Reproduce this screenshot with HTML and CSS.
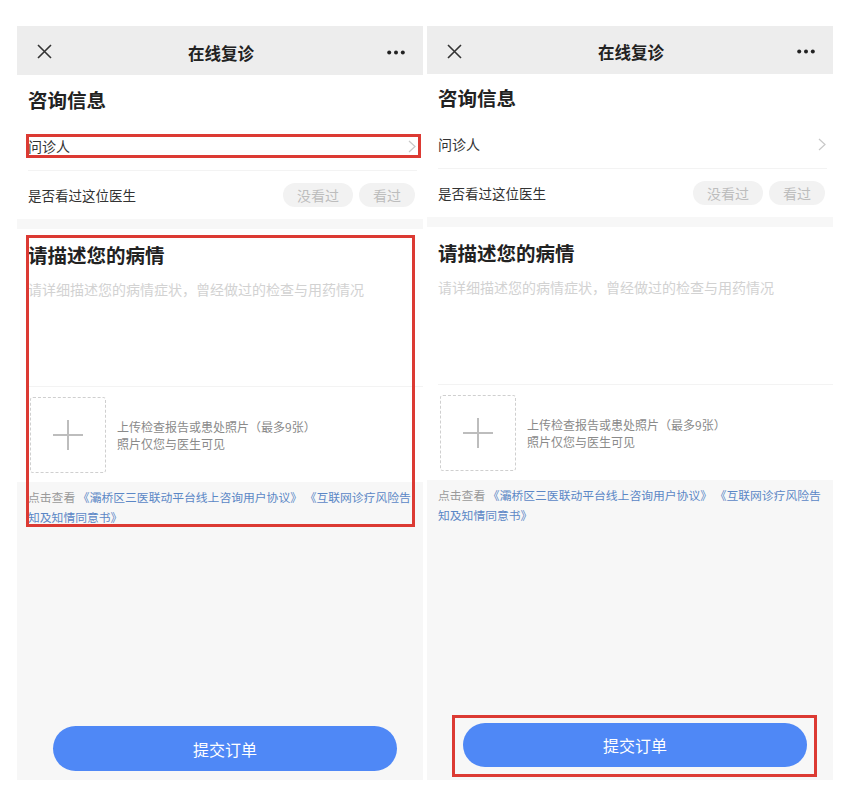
FILE: index.html
```html
<!DOCTYPE html>
<html lang="zh-CN">
<head>
    <meta charset="UTF-8">
    <meta name="viewport" content="width=device-width, initial-scale=1.0">
    <title>在线复诊</title>
    <link rel="stylesheet" href="styles.css">
</head>
<body>
    <div class="page">
        <!-- 第一张截图 -->
        <div class="shot">
            <div class="topbar">
                <svg class="icon-close" width="15" height="15" viewBox="0 0 15 15"><path d="M1 1L14 14M14 1L1 14" stroke="#333" stroke-width="1.6" fill="none"/></svg>
                <div class="topbar-title">在线复诊</div>
                <svg class="icon-more" width="18" height="5" viewBox="0 0 18 5"><circle cx="2.2" cy="2.5" r="2"/><circle cx="9" cy="2.5" r="2"/><circle cx="15.8" cy="2.5" r="2"/></svg>
            </div>
            <div class="info">
                <h2>咨询信息</h2>
                <div class="row">
                    <span>问诊人</span>
                    <svg class="chevron" width="8" height="13" viewBox="0 0 8 13"><polyline points="1,1 7,6.5 1,12" fill="none" stroke="#c8c8c8" stroke-width="1.2"/></svg>
                </div>
                <div class="row">
                    <span class="row-label">是否看过这位医生</span>
                    <div class="pills">
                        <span class="pill">没看过</span>
                        <span class="pill">看过</span>
                    </div>
                </div>
            </div>
            <div class="describe">
                <h2>请描述您的病情</h2>
                <textarea class="describe-input" placeholder="请详细描述您的病情症状，曾经做过的检查与用药情况"></textarea>
                <div class="upload">
                    <div class="upload-box">
                        <svg width="32" height="32" viewBox="0 0 32 32"><path d="M16 1V31M1 16H31" stroke="#bdbdbd" stroke-width="2" fill="none"/></svg>
                    </div>
                    <div class="upload-tip">
                        <div>上传检查报告或患处照片（最多9张）</div>
                        <div>照片仅您与医生可见</div>
                    </div>
                </div>
            </div>
            <p class="agreement">点击查看 <a href="#">《灞桥区三医联动平台线上咨询用户协议》</a> <a href="#">《互联网诊疗风险告知及知情同意书》</a></p>
            <button class="submit">提交订单</button>

            <div class="mark mark--patient"></div>
            <div class="mark mark--desc"></div>
        </div>

        <!-- 第二张截图 -->
        <div class="shot shot--b">
            <div class="topbar">
                <svg class="icon-close" width="15" height="15" viewBox="0 0 15 15"><path d="M1 1L14 14M14 1L1 14" stroke="#333" stroke-width="1.6" fill="none"/></svg>
                <div class="topbar-title">在线复诊</div>
                <svg class="icon-more" width="18" height="5" viewBox="0 0 18 5"><circle cx="2.2" cy="2.5" r="2"/><circle cx="9" cy="2.5" r="2"/><circle cx="15.8" cy="2.5" r="2"/></svg>
            </div>
            <div class="info">
                <h2>咨询信息</h2>
                <div class="row">
                    <span>问诊人</span>
                    <svg class="chevron" width="8" height="13" viewBox="0 0 8 13"><polyline points="1,1 7,6.5 1,12" fill="none" stroke="#c8c8c8" stroke-width="1.2"/></svg>
                </div>
                <div class="row">
                    <span class="row-label">是否看过这位医生</span>
                    <div class="pills">
                        <span class="pill">没看过</span>
                        <span class="pill">看过</span>
                    </div>
                </div>
            </div>
            <div class="describe">
                <h2>请描述您的病情</h2>
                <textarea class="describe-input" placeholder="请详细描述您的病情症状，曾经做过的检查与用药情况"></textarea>
                <div class="upload">
                    <div class="upload-box">
                        <svg width="32" height="32" viewBox="0 0 32 32"><path d="M16 1V31M1 16H31" stroke="#bdbdbd" stroke-width="2" fill="none"/></svg>
                    </div>
                    <div class="upload-tip">
                        <div>上传检查报告或患处照片（最多9张）</div>
                        <div>照片仅您与医生可见</div>
                    </div>
                </div>
            </div>
            <p class="agreement">点击查看 <a href="#">《灞桥区三医联动平台线上咨询用户协议》</a> <a href="#">《互联网诊疗风险告知及知情同意书》</a></p>
            <button class="submit">提交订单</button>

            <div class="mark mark--submit"></div>
        </div>
    </div>
</body>
</html>
```

FILE: styles.css
```css
body {
    margin: 0;
    background-color: #ffffff;
    color: #333333;
    font-family: "Noto Sans CJK SC", "Noto Sans", sans-serif;
}
.page {
    display: flex;
    gap: 4px;
    padding: 26px 0 0 17px;
}
.shot {
    position: relative;
    width: 406px;
    height: 754px;
    display: flex;
    flex-direction: column;
    background-color: #f7f7f7;
}
.topbar {
    height: 49px;
    display: grid;
    grid-template-columns: 1fr auto 1fr;
    align-items: center;
    padding: 0 18px 0 20px;
    background-color: #ededed;
}
.topbar-title {
    font-size: 16.5px;
    font-weight: 700;
    color: #222222;
    padding-top: 4px;
}
.icon-close {
    padding-top: 2px;
}
.icon-more {
    justify-self: end;
    fill: #222222;
    padding-top: 3px;
}
h2 {
    margin: 0;
    font-size: 19.5px;
    line-height: 26px;
    font-weight: 700;
    color: #222222;
}
.info {
    background-color: #ffffff;
    padding: 12px 6px 0 11px;
    margin-bottom: 10px;
}
.info h2 {
    margin-bottom: 9px;
}
.row {
    height: 48px;
    display: flex;
    align-items: center;
    justify-content: space-between;
    font-size: 14px;
    color: #333333;
    border-bottom: 1px solid #f3f3f3;
}
.row:last-child {
    border-bottom: none;
}
.row-label {
    font-size: 13.5px;
}
.chevron {
    margin-right: 1px;
}
.pills {
    display: flex;
    gap: 6px;
    margin-right: 2px;
}
.pill {
    height: 24px;
    line-height: 24px;
    padding: 0 14px;
    border-radius: 12px;
    background-color: #f2f2f2;
    color: #bdbdbd;
    font-size: 14px;
}
.describe {
    background-color: #ffffff;
    padding: 13px 0 0 11px;
}
.describe-input {
    display: block;
    box-sizing: border-box;
    width: 100%;
    height: 108px;
    margin: 11px 0 0;
    padding: 0;
    border: none;
    border-bottom: 1px solid #f3f3f3;
    resize: none;
    font-family: inherit;
    font-size: 14px;
    line-height: 20px;
    color: #333333;
    background: transparent;
}
.describe-input::placeholder {
    color: #d2d2d2;
}
.upload {
    display: flex;
    align-items: center;
    padding: 10px 0 9px 2px;
}
.upload-box {
    box-sizing: border-box;
    width: 76px;
    height: 76px;
    border: 1px dashed #cfcfcf;
    border-radius: 3px;
    display: flex;
    align-items: center;
    justify-content: center;
}
.upload-tip {
    margin-left: 11px;
    font-size: 12px;
    line-height: 17px;
    color: #8a8a8a;
}
.agreement {
    margin: 0;
    padding: 5px 3px 0 11px;
    font-size: 11.8px;
    line-height: 20px;
    color: #9a9a9a;
}
.agreement a {
    color: #5b87c6;
    text-decoration: none;
}
.submit {
    margin: auto 0 9px 36px;
    width: 344px;
    height: 45px;
    border: none;
    border-radius: 23px;
    background-color: #4f88f6;
    color: #ffffff;
    font-family: inherit;
    font-size: 16px;
    cursor: pointer;
}

/* 第二张截图整体略微上移 */
.shot--b .topbar {
    height: 48px;
}
.shot--b .info {
    padding-top: 11px;
}
.shot--b .submit {
    height: 44px;
    margin-bottom: 13px;
}

/* 红框标注 */
.mark {
    position: absolute;
    box-sizing: border-box;
    border: 3px solid #dc3a33;
}
.mark--patient {
    left: 9px;
    top: 108px;
    width: 395px;
    height: 24px;
}
.mark--desc {
    left: 9px;
    top: 209px;
    width: 389px;
    height: 292px;
}
.mark--submit {
    left: 25px;
    top: 689px;
    width: 365px;
    height: 62px;
}
```
